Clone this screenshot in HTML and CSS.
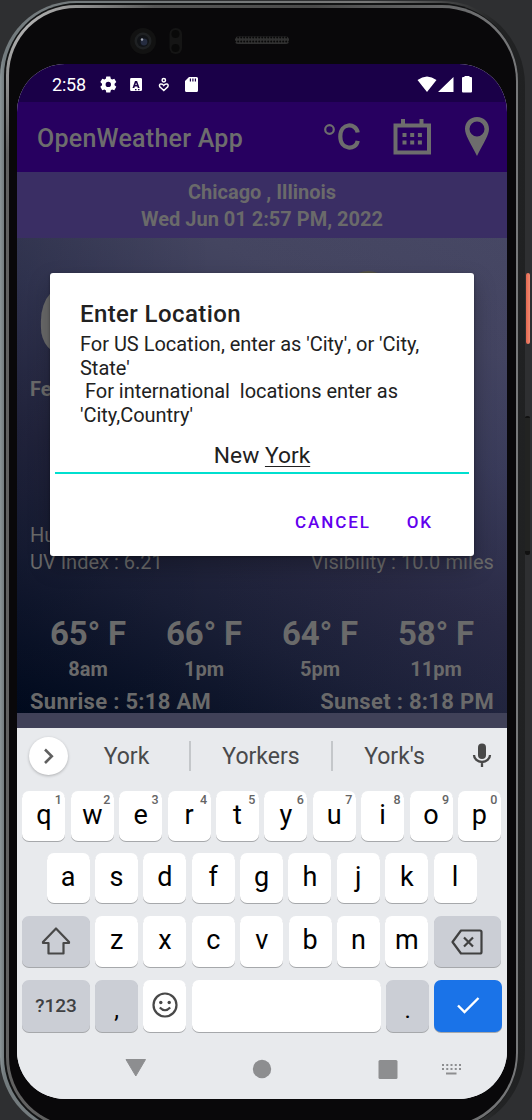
FILE: index.html
```html
<!DOCTYPE html>
<html lang="en">
<head>
<meta charset="utf-8">
<title>OpenWeather App</title>
<link rel="stylesheet" href="styles.css">
</head>
<body>
<div class="stage">
  <div class="side-button power"></div>
  <div class="side-button volume"></div>
  <div class="phone"><div class="rim"><div class="glass">
    <div class="top-bezel">
      <svg class="hardware" width="490" height="56" viewBox="17 8 490 56">
        <defs><pattern id="mesh" width="3" height="4" patternUnits="userSpaceOnUse"><rect width="3" height="4" fill="#303030"/><circle cx="1.2" cy="1.5" r="1" fill="#090909"/></pattern></defs>
        <circle cx="143" cy="41" r="13" fill="#121212"/><circle cx="143" cy="41" r="8.500" fill="#1f2123"/><circle cx="143" cy="41" r="6" fill="#111317"/><circle cx="144" cy="42" r="3.400" fill="#252c40"/><circle cx="142" cy="39.500" r="1.200" fill="#a3a9b4"/>
        <rect x="169.500" y="28" width="12.500" height="26" rx="6" fill="#151515"/><circle cx="175.500" cy="34" r="4" fill="#090909"/><circle cx="175.500" cy="48" r="4" fill="#090909"/>
        <rect x="235" y="36.500" width="54" height="7.500" rx="3" fill="url(#mesh)"/>
      </svg>
    </div>
    <main class="screen">
      <div class="status">
        <span class="time">2:58</span>
        <svg class="status-left" width="100" height="18" viewBox="99 74 100 18" fill="#fff">
          <path fill-rule="evenodd" d="M106.300 75.500h4l.5 2.200 1.300.7 2.200-.7 2 3.400-1.700 1.600v1.500l1.700 1.600-2 3.400-2.200-.7-1.300.7-.5 2.200h-4l-.5-2.200-1.300-.7-2.200.7-2-3.400 1.700-1.600v-1.500l-1.700-1.600 2-3.400 2.200.7 1.300-.7zM108.300 80.700a2.700 2.700 0 1 0 0 5.400 2.700 2.700 0 0 0 0-5.400z"/>
          <path fill-rule="evenodd" d="M131.300 77h9.500q1.200 0 1.200 1.200v10.600q0 1.200-1.200 1.200h-9.500q-1.200 0-1.200-1.200V78.200q0-1.200 1.200-1.200zM135 80l-2.500 7h1.800l.5-1.500h2.500l.5 1.500h1.800l-2.500-7zm1.100 1.800.7 2.300h-1.500zM135 88v1.200h1.500V88zm3 0v1.200h1.500V88z"/>
          <g fill="none" stroke="#fff" stroke-width="1.500"><circle cx="163.800" cy="79.200" r="1.700"/><path d="M163.800 89.500l-4-3.700q-1-2.200 1-2.900 1.800-.2 3 1.500 1.200-1.700 3-1.500 2 .7 1 2.900z"/></g>
          <path fill-rule="evenodd" d="M189 76h7.500q1.500 0 1.500 1.500v12q0 1.500-1.500 1.500h-10q-1.500 0-1.500-1.500V80zM189.800 77.500v3h1.200v-3zm2.500 0v3h1.200v-3zm2.500 0v3h1.200v-3z"/>
        </svg>
        <svg class="status-right" width="56" height="18" viewBox="417 74 56 18" fill="#fff">
          <path d="M417.500 79Q427 72 436.500 79L427 91zM453.500 76v15H438z"/><path d="M464.500 76v-1h5v1h1.500q1 0 1 1v13.500q0 1-1 1h-8q-1 0-1-1V77q0-1 1-1z"/>
        </svg>
      </div>
      <header class="appbar">
        <h1>OpenWeather App</h1>
        <svg width="174" height="44" viewBox="321 115 174 44" fill="none" stroke="#6d6d6d">
          <circle cx="329.500" cy="129.500" r="4.300" stroke-width="2.200"/>
          <path d="M357.700 132.500C356 122.500 340.300 122.500 340.300 136.500S356 150.500 357.700 140.800" stroke-width="4.200"/>
          <rect x="395.500" y="125.500" width="33.500" height="27" stroke-width="4"/>
          <path d="M403 119v6M421.500 119v6" stroke-width="4"/>
          <path d="M402.500 135h20M402.500 142.500h20" stroke-width="4" stroke-dasharray="4 3.700"/>
          <path fill="#6d6d6d" stroke="none" fill-rule="evenodd" d="M477 117c-7 0-12 5-12 12 0 6 5 13 12 27 7-14 12-21 12-27 0-7-5-12-12-12zm0 4.500a7.500 7.500 0 1 1 0 15 7.500 7.500 0 0 1 0-15z"/>
        </svg>
      </header>
      <section class="place"><div>Chicago , Illinois</div><div>Wed Jun 01 2:57 PM, 2022</div></section>
      <section class="weather">
        <div class="current"><span class="temperature">6</span><span class="sun"></span></div>
        <div class="feels">Fe</div>
        <div class="details">
          <div class="pair"><span>Hu</span></div>
          <div class="pair"><span>UV Index : 6.21</span><span class="visibility">Visibility : 10.0 miles</span></div>
        </div>
        <div class="forecast">
          <div><b>65° F</b><span>8am</span></div><div><b>66° F</b><span>1pm</span></div><div><b>64° F</b><span>5pm</span></div><div><b>58° F</b><span>11pm</span></div>
        </div>
        <div class="pair suntimes"><span>Sunrise : 5:18 AM</span><span>Sunset : 8:18 PM</span></div>
      </section>
      <div class="strip"></div>
      <section class="keyboard">
        <div class="suggestions">
          <div class="expand"><svg width="38" height="38" viewBox="0 0 38 38" fill="none" stroke="#606060" stroke-width="2.600"><path d="M16 12.500l6.800 6.700L16 26"/></svg></div>
          <span class="word first">York</span><span class="word second">Yorkers</span><span class="word third">York's</span>
          <svg class="mic" width="20" height="28" viewBox="0 0 20 28"><rect x="6" y="1.500" width="8" height="15.500" rx="4" fill="#484848"/><path d="M2 13a8 7 0 0 0 16 0M10 20v5" fill="none" stroke="#484848" stroke-width="2.300"/></svg>
        </div>
        <div class="row r1">
          <div class="key">q<sup>1</sup></div><div class="key">w<sup>2</sup></div><div class="key">e<sup>3</sup></div><div class="key">r<sup>4</sup></div><div class="key">t<sup>5</sup></div><div class="key">y<sup>6</sup></div><div class="key">u<sup>7</sup></div><div class="key">i<sup>8</sup></div><div class="key">o<sup>9</sup></div><div class="key">p<sup>0</sup></div>
        </div>
        <div class="row r2"><div class="key">a</div><div class="key">s</div><div class="key">d</div><div class="key">f</div><div class="key">g</div><div class="key">h</div><div class="key">j</div><div class="key">k</div><div class="key">l</div></div>
        <div class="row r3">
          <div class="key wide grey"><svg width="32" height="30" viewBox="0 0 32 30" fill="none" stroke="#484848" stroke-width="2.200" stroke-linejoin="round"><path d="M16 3.500 29 17v1h-5.500v10.500h-15V18H3v-1z"/></svg></div>
          <div class="key">z</div><div class="key">x</div><div class="key">c</div><div class="key">v</div><div class="key">b</div><div class="key">n</div><div class="key">m</div>
          <div class="key wide grey"><svg width="34" height="30" viewBox="0 0 34 30" fill="none" stroke="#404040" stroke-width="2.200" stroke-linejoin="round"><path d="M11 5.500h19q1.500 0 1.500 1.500v20q0 1.500-1.500 1.500H11L2.500 17zM14 12.500l9 9m0-9-9 9"/></svg></div>
        </div>
        <div class="row r4">
          <div class="key wide grey label">?123</div><div class="key grey punct">,</div>
          <div class="key"><svg width="28" height="28" viewBox="0 0 28 28" fill="none" stroke="#484848" stroke-width="2.200"><circle cx="14" cy="14" r="11.500"/><path d="M8.800 16.500q5.200 5.500 10.400 0"/><circle cx="9.800" cy="11.500" r="1.700" fill="#484848" stroke="none"/><circle cx="18.200" cy="11.500" r="1.700" fill="#484848" stroke="none"/></svg></div>
          <div class="key space"></div><div class="key grey punct">.</div>
          <div class="key wide enter"><svg width="28" height="24" viewBox="0 0 28 24" fill="none" stroke="#fff" stroke-width="2.400"><path d="M4 12.500l6.500 6.500L24.500 5"/></svg></div>
        </div>
        <svg class="nav" width="490" height="67" viewBox="17 1032 490 67" fill="#8d8e90">
          <path d="M126 1059.500h19.500l-9.700 16.500z" stroke="#8d8e90" stroke-linejoin="round"/><circle cx="262" cy="1069" r="9.200"/><rect x="378.500" y="1060" width="19" height="19" rx="1.500"/>
          <path d="M442 1065h19M442 1069h19" stroke="#8d8e90" stroke-width="2" stroke-dasharray="2 2.250"/><rect x="446" y="1072.500" width="10.500" height="2"/>
        </svg>
      </section>
      <div class="dialog" role="dialog">
        <h2>Enter Location</h2>
        <p>For US Location, enter as 'City', or 'City,<br>State'<br>&nbsp;For international&nbsp; locations enter as<br>'City,Country'</p>
        <div class="input">New <u>York</u></div>
        <div class="actions"><span>CANCEL</span><span>OK</span></div>
      </div>
    </main>
  </div></div></div>
</div>
</body>
</html>
```

FILE: styles.css
```css
* { box-sizing: border-box; }
body { margin: 0; font-family: Roboto, sans-serif; }
.stage { position: relative; width: 532px; height: 1120px; overflow: hidden; background: #2e2f31; }
.side-button { position: absolute; }
.power { left: 526px; top: 273px; width: 4px; height: 71px; border-radius: 2px; background: linear-gradient(90deg, #e3664f, #f08a72); }
.volume { left: 525px; top: 416px; width: 5px; height: 139px; border-radius: 2px; background: #222322; border-top: 2px solid #111; border-bottom: 4px solid #111; }

/* Device frame */
.phone { width: 525px; height: 1132px; margin-top: 1px; padding: 2px 7px 2px 4px; border-radius: 76px 84px 82px 76px; background: linear-gradient(90deg, #8b9598 0, #737b7e 4px, #777 70%, #3a3b3c 88%, #222324 95%, #202122); }
.rim { height: 1128px; padding: 2px 0 2px 2px; border-radius: 73px 78px 78px 74px; background: #121314; }
.glass { width: 512px; height: 1124px; padding: 0 9px 0 8px; border: solid transparent; border-width: 3px 2px 3px 3px; border-radius: 70px 76px 76px 72px; background: linear-gradient(#09080a, #09080a) padding-box, radial-gradient(circle at 20px 20px, #b0b0b0 0, #a0a0a0 35px, rgba(100,100,100,0) 130px) border-box, linear-gradient(90deg, #626262, #4a4a4a 60%, #77787a 100%) border-box; }
.top-bezel { height: 56px; }
.hardware { display: block; }
.screen { position: relative; width: 490px; height: 1035px; border-radius: 48px; overflow: hidden; background: #e8eaed; }

.status { height: 38px; display: flex; align-items: center; padding: 2px 34px 0 35px; background: #1a0048; color: #fff; }
.time { width: 47px; font-size: 18px; letter-spacing: -.2px; }
.status-left { display: block; }
.status-right { margin-left: auto; }
.appbar { height: 70px; display: flex; align-items: center; justify-content: space-between; padding: 0 12px 0 20px; background: #270060; color: #6d6d6d; }
.appbar h1 { margin: 3px 0 0; font-size: 25px; line-height: 30px; font-weight: 500; letter-spacing: .25px; white-space: nowrap; }
.place { height: 66px; padding-top: 7px; background: #3a2e64; color: #6a6a6a; font-size: 20px; line-height: 27px; font-weight: 700; text-align: center; }
.weather { height: 475px; padding-top: 28px; color: #6a6a6a; background: linear-gradient(90deg, rgba(0,8,28,.18), rgba(20,20,50,0) 40%, rgba(60,60,100,.14)), linear-gradient(22deg, #000a1d 0%, #191e35 25%, #262740 42%, #393b58 65%, #444560 82%, #484964 100%); }
.current { height: 108px; display: flex; justify-content: space-between; padding: 0 115px 0 19px; }
.temperature { font-size: 100px; line-height: 108px; font-weight: 700; }
.sun { width: 48px; height: 48px; margin-top: 5px; border-radius: 50%; background: #555347; }
.feels { height: 148px; padding: 1px 13px 0; font-size: 20px; line-height: 28px; font-weight: 700; }
.details { height: 90px; font-size: 20px; line-height: 27px; }
.visibility { letter-spacing: .08px; }
.pair { display: flex; justify-content: space-between; padding: 0 13px; white-space: nowrap; }
.forecast { height: 76px; display: grid; grid-template-columns: repeat(4, 116px); padding-left: 13px; }
.forecast div { text-align: center; }
.forecast b { display: block; font-size: 33px; line-height: 43px; letter-spacing: -.2px; }
.forecast span { display: block; font-size: 20px; line-height: 28px; font-weight: 700; }
.suntimes { font-size: 22px; line-height: 27px; font-weight: 700; letter-spacing: .3px; }
.strip { height: 15px; background: #404158; }

.dialog { position: absolute; left: 33px; top: 209px; width: 424px; height: 283px; padding: 26px 5px 0; border-radius: 3px; background: #fff; color: #212121; box-shadow: 0 10px 22px rgba(0,0,0,.25), 0 1px 3px rgba(0,0,0,.35); }
.dialog h2 { margin: 0 25px; font-size: 24px; line-height: 30px; font-weight: 500; letter-spacing: .4px; }
.dialog p { margin: 4px 0 0 25px; font-size: 20px; line-height: 23.500px; letter-spacing: -.02px; white-space: nowrap; }
.input { height: 47px; padding-top: 15px; border-bottom: 2px solid #00dfcf; font-size: 22.800px; line-height: 27px; text-align: center; }
.input u { text-decoration-thickness: 1px; text-underline-offset: 3px; text-decoration-skip-ink: none; }
.actions { display: flex; justify-content: flex-end; gap: 36px; padding: 36px 36px 0; color: #6200ee; font-size: 17px; line-height: 24px; font-weight: 500; letter-spacing: 1.900px; }

.keyboard { height: 371px; background: #e8eaed; color: #000; }
.suggestions { height: 63px; display: flex; align-items: center; padding: 0 15px 8px 12px; color: #48494b; font-size: 23px; }
.expand { width: 39px; height: 38px; border-radius: 50%; background: #fff; box-shadow: 0 1px 3px rgba(0,0,0,.25); }
.expand svg { display: block; }
.word { height: 30px; line-height: 32px; text-align: center; }
.first { width: 123px; border-right: 2px solid #c4c7ca; padding-right: 6px; padding-left: 2px; }
.second { width: 142px; border-right: 2px solid #c4c7ca; }
.third { width: 123px; }
.mic { margin-left: auto; }
.row { display: flex; gap: 5.400px; padding: 0 5.400px; }
.key { position: relative; flex: 0 0 43px; height: 50px; display: flex; align-items: center; justify-content: center; padding-bottom: 2px; border-radius: 7px; background: #fff; box-shadow: 0 1px 0 #a6a8ab; font-size: 27px; line-height: 48px; }
.key sup { position: absolute; right: 3.500px; top: 2px; font-size: 12.500px; line-height: 14px; font-weight: 500; color: #646464; }
.r2 { margin-top: 12px; padding-left: 29.500px; }
.r3 { margin-top: 13px; }
.r4 { margin-top: 13px; }
.r2 .key { padding-bottom: 3px; }
.r3 .key { height: 51px; padding-bottom: 3px; }
.r4 .key { height: 52px; }
.key.wide { flex-basis: 67.300px; }
.key.grey { background: #cbced5; }
.key.space { flex-basis: 188.800px; }
.key.enter { background: #1a73e8; }
.key.label { padding-top: 2px; font-size: 19px; color: #3f4042; font-weight: 500; }
.key.punct { padding-top: 10px; font-size: 24px; }
.nav { display: block; }
```
